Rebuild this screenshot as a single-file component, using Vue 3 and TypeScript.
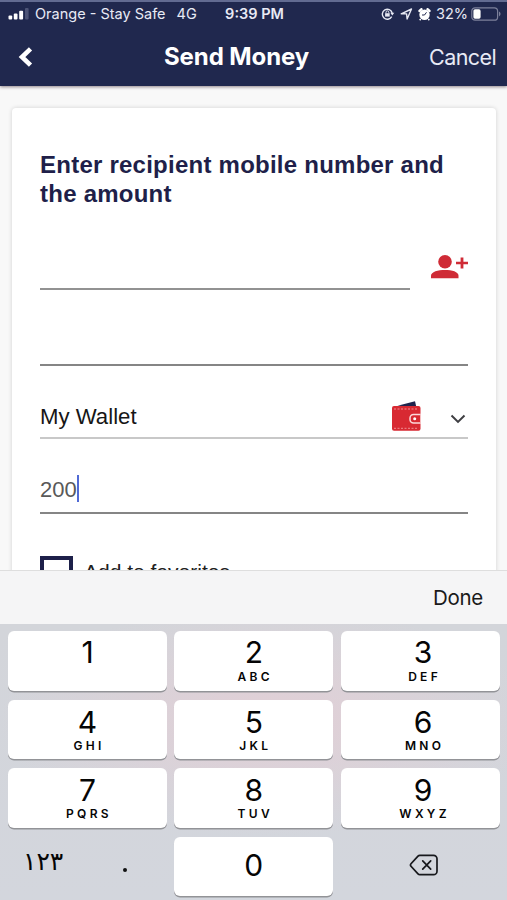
<script setup lang="ts">
import { ref } from 'vue'

interface Key {
  digit: string
  letters: string
}

const keys: Key[] = [
  { digit: '1', letters: '' },
  { digit: '2', letters: 'ABC' },
  { digit: '3', letters: 'DEF' },
  { digit: '4', letters: 'GHI' },
  { digit: '5', letters: 'JKL' },
  { digit: '6', letters: 'MNO' },
  { digit: '7', letters: 'PQRS' },
  { digit: '8', letters: 'TUV' },
  { digit: '9', letters: 'WXYZ' },
]

const amount = ref('200')

function press(digit: string) {
  amount.value += digit
}

function erase() {
  amount.value = amount.value.slice(0, -1)
}
</script>

<template>
  <div class="phone">
    <header class="header">
      <div class="status">
        <div class="status-left">
          <svg class="signal" width="22" height="12" viewBox="0 0 22 12">
            <rect x="0.5" y="7.5" width="3.7" height="4" rx="1" fill="#fff" />
            <rect x="5.8" y="5.5" width="3.7" height="6" rx="1" fill="#fff" />
            <rect x="11.2" y="2.8" width="3.9" height="8.7" rx="1" fill="#fff" />
            <rect x="17" y="0" width="3.6" height="11.5" rx="1" fill="#4d5477" />
          </svg>
          <span class="carrier">Orange - Stay Safe</span>
          <span class="network">4G</span>
        </div>
        <span class="clock">9:39 PM</span>
        <div class="status-right">
          <svg width="14" height="12" viewBox="0 0 14 12" fill="none" stroke="#e6e8f3" stroke-width="1.4">
            <path d="M10.7 8.7A5 5 0 1 1 11.2 5" />
            <path d="M9.3 4.7h4l-2 2.8z" fill="#e6e8f3" stroke="none" />
            <rect x="4.1" y="5.2" width="4.6" height="3.4" fill="#e6e8f3" stroke="none" />
            <path d="M5 5.2V4.3a1.4 1.4 0 0 1 2.8 0v.9" stroke-width="1" />
          </svg>
          <svg class="arrow" width="13" height="12" viewBox="0 0 13 12" fill="none" stroke="#e6e8f3" stroke-width="1.4" stroke-linejoin="round">
            <path d="M1.2 5.8 11.5 1 7.1 11l-.5-5.1z" />
          </svg>
          <svg class="alarm" width="13" height="13" viewBox="0 0 13 13">
            <path d="M1.5 3 3.5 1.2M11.5 3 9.5 1.2" stroke="#fff" stroke-width="2.4" stroke-linecap="round" />
            <circle cx="6.5" cy="6.8" r="5.2" fill="#fff" />
            <path d="m2.7 11-1 1.3M10.3 11l1 1.3" stroke="#fff" stroke-width="1.5" />
            <path d="M8.5 4.3 6.5 7H4" fill="none" stroke="#20284e" />
          </svg>
          <span class="percent">32%</span>
          <svg class="battery" width="30" height="14" viewBox="0 0 30 14">
            <rect x="0.8" y="0.8" width="25.8" height="12.4" rx="3.3" fill="none" stroke="#7c809b" stroke-width="1.2" />
            <rect x="2.4" y="2.3" width="7.2" height="9.4" rx="1.6" fill="#fff" />
            <path d="M28 4.6v4.8c2-.9 2-3.9 0-4.8" fill="#7c809b" />
          </svg>
        </div>
      </div>
      <nav class="nav">
        <button class="back" aria-label="Back">
          <svg width="16" height="20" viewBox="0 0 16 20" fill="none" stroke="#fff" stroke-width="4.6">
            <path d="M13.5 1.9 5 10l8.5 8.1" />
          </svg>
        </button>
        <h1 class="title">Send Money</h1>
        <button class="cancel">Cancel</button>
      </nav>
    </header>

    <main class="content">
      <section class="card">
        <h2 class="heading">Enter recipient mobile number and the amount</h2>
        <div class="recipient">
          <div class="line"></div>
          <svg class="contact" width="38" height="26" viewBox="0 0 38 26" fill="#cf2b36">
            <circle cx="15" cy="7.7" r="6.8" />
            <path d="M1 24.2v-2.4C1 17.7 8 16 15 16s13.5 1.7 13.500 5.800v2.400z" />
            <path d="M30.600 3.400h2.800v4.300H38v2.500h-4.600v4.400h-2.800v-4.400H26V7.700h4.600z" />
          </svg>
        </div>
        <div class="blank"></div>
        <div class="wallet">
          <span class="wallet-name">My Wallet</span>
          <svg class="wallet-icon" width="31" height="32" viewBox="0 0 31 32">
            <path d="M6.500 5.800 24 1.200l1.300 5.500z" fill="#20244d" />
            <rect x="1" y="6" width="28.500" height="24.800" rx="2" fill="#d82932" />
            <path d="M3 9h24M3 28.300h24" fill="none" stroke="#f18c90" stroke-width="1" stroke-dasharray="2 1.500" />
            <path d="M30 14.500h-7.500a3.500 3.500 0 0 0-3.500 3.500v1.500a3.500 3.500 0 0 0 3.500 3.500H30" fill="#d82932" stroke="#fbd8d9" stroke-width="1.500" />
            <path d="M29.500 14.500v9" stroke="#f7bfc1" />
            <circle cx="23.700" cy="18.800" r="1.500" fill="#fff" />
          </svg>
          <svg class="chevron" width="16" height="10" viewBox="0 0 16 10" fill="none" stroke="#3e3e42" stroke-width="2">
            <path d="m1.500 1.500 6.500 6.400 6.500-6.400" />
          </svg>
        </div>
        <div class="amount">
          <span class="amount-value">{{ amount }}</span><i class="caret"></i>
        </div>
        <div class="favorite">
          <span class="box"></span>
          <span class="favorite-label">Add to favorites</span>
        </div>
      </section>
    </main>

    <div class="toolbar"><button class="done">Done</button></div>

    <div class="keypad">
      <button v-for="key in keys" :key="key.digit" class="key" @click="press(key.digit)">
        <span class="digit">{{ key.digit }}</span>
        <span class="letters">{{ key.letters }}</span>
      </button>
      <div class="extras">
        <span class="arabic">١٢٣</span>
        <span class="dot"></span>
      </div>
      <button class="key zero" @click="press('0')"><span class="digit">0</span></button>
      <button class="erase" aria-label="Delete" @click="erase">
        <svg width="30" height="22" viewBox="0 0 30 22" fill="none" stroke="#17181c" stroke-width="1.7" stroke-linejoin="round" stroke-linecap="round">
          <path d="M10.800 1.300h13.700a3.500 3.500 0 0 1 3.500 3.500v12.400a3.500 3.500 0 0 1-3.500 3.500H10.800a2.500 2.500 0 0 1-1.800-.8L2 12.200a1.800 1.800 0 0 1 0-2.400l7-7.700a2.500 2.500 0 0 1 1.800-.8z" />
          <path d="m13.700 6.800 8 8.400m0-8.400-8 8.400" />
        </svg>
      </button>
    </div>
  </div>
</template>

<style>
body {
  margin: 0;
}
</style>

<style scoped>
.phone {
  width: 507px;
  height: 900px;
  display: flex;
  flex-direction: column;
  overflow: hidden;
  background: #f8f8f8;
  font-family: Inter, 'Liberation Sans', sans-serif;
}
button {
  margin: 0;
  padding: 0;
  border: 0;
  background: none;
  color: inherit;
  font: inherit;
}
svg {
  display: block;
  flex: none;
}
.header {
  box-sizing: border-box;
  flex: none;
  height: 86px;
  border-top: 2px solid #626b91;
  background: #20284e;
  color: #e8eaf5;
  box-shadow: 0 1px 3px rgba(60, 40, 50, 0.55);
}
.status {
  display: grid;
  grid-template-columns: 1fr auto 1fr;
  height: 24px;
  padding: 0 6px 0 8px;
  align-items: center;
  font-size: 14.5px;
  line-height: 24px;
  white-space: nowrap;
}
.status-left,
.status-right {
  display: flex;
  align-items: center;
}
.status-right {
  justify-content: flex-end;
}
.carrier {
  margin-left: 5px;
}
.network {
  margin-left: 11px;
}
.clock {
  font-weight: 600;
}
.arrow,
.alarm,
.percent {
  margin-left: 5px;
}
.battery {
  margin-left: 3px;
}
.nav {
  display: grid;
  grid-template-columns: 147px auto 1fr;
  height: 61px;
  padding: 0 11px 0 17px;
  align-items: center;
}
.back {
  justify-self: start;
}
.title {
  margin: 0;
  color: #fff;
  font-size: 24px;
  font-weight: 700;
  letter-spacing: -0.1px;
}
.cancel {
  justify-self: end;
  font-size: 21.5px;
  letter-spacing: -0.6px;
}
.content {
  flex: 1;
  min-height: 0;
  padding: 22px 11px 0 12px;
  overflow: hidden;
}
.card {
  height: 560px;
  padding: 42px 28px 0;
  border-radius: 4px;
  background: #fff;
  box-shadow: 0 0 4px rgba(0, 0, 0, 0.16);
  font-family: 'Liberation Sans', sans-serif;
}
.heading {
  margin: 0;
  color: #201f49;
  font-size: 24px;
  line-height: 29px;
  font-weight: 700;
  letter-spacing: 0.24px;
}
.recipient {
  display: flex;
  height: 82px;
  align-items: flex-end;
  justify-content: space-between;
}
.line {
  width: 370px;
  height: 2px;
  background: #929292;
}
.contact {
  margin-bottom: 10px;
}
.blank {
  height: 74px;
  border-bottom: 2px solid #858585;
}
.wallet {
  display: flex;
  height: 71px;
  align-items: center;
  border-bottom: 2px solid #c8c8c8;
}
.wallet-name {
  flex: 1;
  padding-top: 31px;
  color: #161616;
  font-size: 22.2px;
}
.wallet-icon {
  margin-top: 29px;
}
.chevron {
  margin: 34px 2px 0 28px;
}
.amount {
  display: flex;
  height: 73px;
  align-items: center;
  border-bottom: 2px solid #858585;
}
.amount-value {
  padding-top: 28px;
  color: #595959;
  font-size: 22px;
}
.caret {
  width: 2px;
  height: 27px;
  margin-top: 26px;
  background: #506ad5;
}
.favorite {
  display: flex;
  margin-top: 42px;
}
.box {
  box-sizing: border-box;
  width: 33px;
  height: 33px;
  border: 4px solid #1d2049;
}
.favorite-label {
  margin-left: 11px;
  padding-top: 4px;
  color: #202020;
  font-size: 21px;
}
.toolbar {
  box-sizing: border-box;
  display: flex;
  flex: none;
  height: 54px;
  padding: 0 24px 0 0;
  align-items: center;
  justify-content: flex-end;
  border-top: 1px solid #dedede;
  background: #f5f5f6;
  color: #1a1a1a;
}
.done {
  font-size: 20.5px;
  letter-spacing: -0.3px;
}
.keypad {
  box-sizing: border-box;
  display: grid;
  flex: none;
  grid-template-columns: repeat(3, 159px);
  grid-template-rows: repeat(4, 60px);
  height: 276px;
  padding: 7px 7px 0 8px;
  column-gap: 7.3px;
  row-gap: 8.6px;
  background:
    radial-gradient(ellipse 270px 115px at 53% 35%, #e2cfd6, rgba(222, 210, 216, 0)),
    linear-gradient(#d3d5da, #d3d6dd);
  color: #050505;
}
.key {
  display: flex;
  box-sizing: border-box;
  flex-direction: column;
  align-items: center;
  height: 59.5px;
  border-radius: 6px;
  background: #fff;
  box-shadow: 0 1.5px 0.5px #929397;
}
.key:nth-child(3n) {
  padding-left: 6px;
}
.digit {
  margin-top: 4px;
  font-size: 30px;
  line-height: 34px;
}
.key:nth-child(n + 4) .digit {
  margin: 5px 0 -1px;
}
.letters {
  margin-left: 3px;
  font-size: 12px;
  line-height: 16px;
  font-weight: 600;
  letter-spacing: 3.3px;
}
.key.zero .digit {
  margin-top: 11px;
}
.extras {
  display: flex;
}
.arabic {
  margin: 10px 0 0 15px;
  font-family: 'DejaVu Sans', sans-serif;
  font-size: 25px;
}
.dot {
  width: 4px;
  height: 4px;
  margin: 31px 0 0 60px;
  border-radius: 50%;
  background: #111;
}
.erase {
  display: flex;
  align-items: center;
  justify-content: center;
  height: 57px;
  padding-left: 7px;
}
</style>
